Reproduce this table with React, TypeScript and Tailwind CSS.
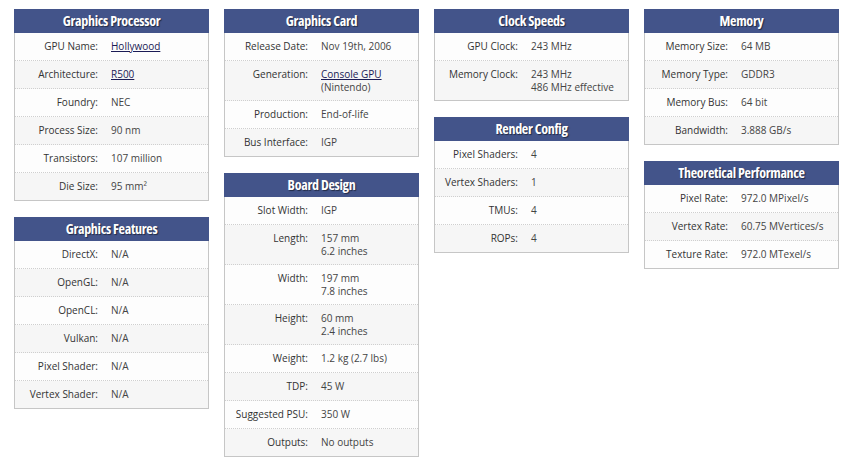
type Row = { label: string; value: string[]; link?: boolean };
type Section = { title: string; rows: Row[] };

const columns: Section[][] = [
  [
    {
      title: "Graphics Processor",
      rows: [
        { label: "GPU Name:", value: ["Hollywood"], link: true },
        { label: "Architecture:", value: ["R500"], link: true },
        { label: "Foundry:", value: ["NEC"] },
        { label: "Process Size:", value: ["90 nm"] },
        { label: "Transistors:", value: ["107 million"] },
        { label: "Die Size:", value: ["95 mm²"] },
      ],
    },
    {
      title: "Graphics Features",
      rows: [
        { label: "DirectX:", value: ["N/A"] },
        { label: "OpenGL:", value: ["N/A"] },
        { label: "OpenCL:", value: ["N/A"] },
        { label: "Vulkan:", value: ["N/A"] },
        { label: "Pixel Shader:", value: ["N/A"] },
        { label: "Vertex Shader:", value: ["N/A"] },
      ],
    },
  ],
  [
    {
      title: "Graphics Card",
      rows: [
        { label: "Release Date:", value: ["Nov 19th, 2006"] },
        { label: "Generation:", value: ["Console GPU", "(Nintendo)"], link: true },
        { label: "Production:", value: ["End-of-life"] },
        { label: "Bus Interface:", value: ["IGP"] },
      ],
    },
    {
      title: "Board Design",
      rows: [
        { label: "Slot Width:", value: ["IGP"] },
        { label: "Length:", value: ["157 mm", "6.2 inches"] },
        { label: "Width:", value: ["197 mm", "7.8 inches"] },
        { label: "Height:", value: ["60 mm", "2.4 inches"] },
        { label: "Weight:", value: ["1.2 kg (2.7 lbs)"] },
        { label: "TDP:", value: ["45 W"] },
        { label: "Suggested PSU:", value: ["350 W"] },
        { label: "Outputs:", value: ["No outputs"] },
      ],
    },
  ],
  [
    {
      title: "Clock Speeds",
      rows: [
        { label: "GPU Clock:", value: ["243 MHz"] },
        { label: "Memory Clock:", value: ["243 MHz", "486 MHz effective"] },
      ],
    },
    {
      title: "Render Config",
      rows: [
        { label: "Pixel Shaders:", value: ["4"] },
        { label: "Vertex Shaders:", value: ["1"] },
        { label: "TMUs:", value: ["4"] },
        { label: "ROPs:", value: ["4"] },
      ],
    },
  ],
  [
    {
      title: "Memory",
      rows: [
        { label: "Memory Size:", value: ["64 MB"] },
        { label: "Memory Type:", value: ["GDDR3"] },
        { label: "Memory Bus:", value: ["64 bit"] },
        { label: "Bandwidth:", value: ["3.888 GB/s"] },
      ],
    },
    {
      title: "Theoretical Performance",
      rows: [
        { label: "Pixel Rate:", value: ["972.0 MPixel/s"] },
        { label: "Vertex Rate:", value: ["60.75 MVertices/s"] },
        { label: "Texture Rate:", value: ["972.0 MTexel/s"] },
      ],
    },
  ],
];

function SpecCard({ section }: { section: Section }) {
  return (
    <div className="w-[195px]">
      <div className="h-[24px] bg-[#43548a] text-center text-[14px] leading-[24px] font-bold tracking-[-0.3px] text-white [font-family:'Open_Sans',sans-serif] [font-stretch:75%] [text-shadow:1px_1px_1px_rgba(0,0,0,0.5)]">
        {section.title}
      </div>
      <div className="border-x border-b border-[#c6c6c6]">
        {section.rows.map((row, i) => (
          <div
            key={row.label}
            className={`flex pt-[7px] text-[10px] leading-[13px] ${
              row.value.length > 1 ? "pb-[6px]" : "pb-[7px]"
            } ${
              i < section.rows.length - 1 ? "border-b border-dotted border-[#cfcfcf]" : ""
            } ${i % 2 === 0 ? "bg-[#fdfdfd]" : "bg-[#f6f6f6]"}`}
          >
            <div className="w-[83px] shrink-0 text-right text-[#333]">{row.label}</div>
            <div className="ml-[13px] text-[#444]">
              {row.value.map((v, j) =>
                row.link && j === 0 ? (
                  <div key={v}>
                    <span className="text-[#1b1b55] underline">{v}</span>
                  </div>
                ) : (
                  <div key={v}>{v}</div>
                )
              )}
            </div>
          </div>
        ))}
      </div>
    </div>
  );
}

export default function App() {
  return (
    <div className="min-h-[467px] w-[854px] bg-white pl-[14px] pt-[9px] [font-family:'Open_Sans',sans-serif]">
      <div className="flex items-start gap-[15px]">
        {columns.map((col, c) => (
          <div key={c} className="flex flex-col gap-[16px]">
            {col.map((s) => (
              <SpecCard key={s.title} section={s} />
            ))}
          </div>
        ))}
      </div>
    </div>
  );
}
